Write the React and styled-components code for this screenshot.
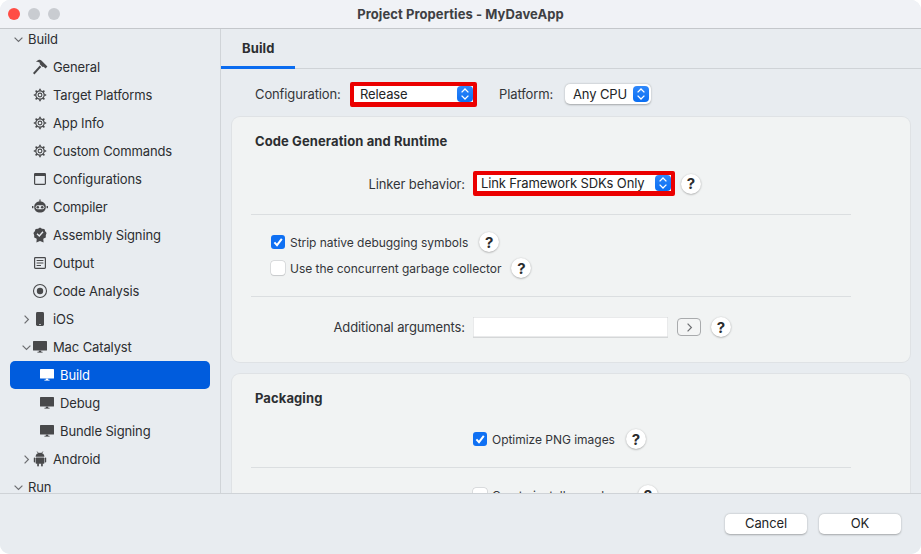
import React from "react";
import styled, { createGlobalStyle } from "styled-components";

const GlobalStyle = createGlobalStyle`
  html, body {
    margin: 0;
    background: #ffffff;
  }
  * {
    box-sizing: border-box;
  }
`;

const ICON_COLOR = "#48494b";

const GearIcon = () => (
  <svg width="16" height="16" viewBox="0 0 16 16">
    {[0, 45, 90, 135, 180, 225, 270, 315].map((a) => (
      <line key={a} x1="8" y1="1.8" x2="8" y2="3.8" stroke={ICON_COLOR} strokeWidth="1.6" transform={`rotate(${a} 8 8)`} />
    ))}
    <circle cx="8" cy="8" r="4.2" fill="none" stroke={ICON_COLOR} strokeWidth="1.2" />
    <circle cx="8" cy="8" r="1.9" fill="none" stroke={ICON_COLOR} strokeWidth="1.1" />
  </svg>
);

const HammerIcon = () => (
  <svg width="16" height="16" viewBox="0 0 16 16">
    <path d="M1 14 L7.8 6.6 L9.2 8 L2.4 15.4 Z" fill={ICON_COLOR} />
    <path d="M4 2.8 C6.4 0.6 8 0.4 9.4 1.4 L15.4 7.4 L13.6 9.6 L11.6 7.8 L10.6 8 L7.8 5.2 L7.8 3.8 C6.8 3 5.6 2.8 4 2.8 Z" fill={ICON_COLOR} />
  </svg>
);

const WindowIcon = () => (
  <svg width="16" height="16" viewBox="0 0 16 16">
    <rect x="2.6" y="2.6" width="10.8" height="10.8" rx="0.8" fill="none" stroke={ICON_COLOR} strokeWidth="1.2" />
    <rect x="2.6" y="2.6" width="10.8" height="2.4" fill={ICON_COLOR} />
  </svg>
);

const RobotIcon = () => (
  <svg width="16" height="16" viewBox="0 0 16 16">
    <line x1="8" y1="0.6" x2="8" y2="3" stroke={ICON_COLOR} strokeWidth="1.2" />
    <rect x="0" y="7" width="1.4" height="2.2" fill={ICON_COLOR} />
    <rect x="14.6" y="7" width="1.4" height="2.2" fill={ICON_COLOR} />
    <path d="M2.2 8 C2.2 4.6 4.8 2.6 8 2.6 C11.2 2.6 13.8 4.6 13.8 8 C13.8 11.6 11.2 13.6 8 13.6 C4.8 13.6 2.2 11.6 2.2 8 Z" fill={ICON_COLOR} />
    <rect x="3.6" y="6.2" width="8.8" height="4" rx="2" fill="#e8ecf0" />
    <circle cx="5.8" cy="8.2" r="1.3" fill={ICON_COLOR} />
    <circle cx="10.2" cy="8.2" r="1.3" fill={ICON_COLOR} />
  </svg>
);

const BadgeIcon = () => (
  <svg width="16" height="16" viewBox="0 0 16 16">
    <path d="M4.8 11 L4.4 15.4 L8 14 L11.6 15.4 L11.2 11 Z" fill={ICON_COLOR} />
    <path d="M8 0.6 L10 1.8 L12.4 2 L13.2 4.2 L14.6 6 L13.8 8.2 L13.8 10.4 L11.6 11.4 L10 12.8 L8 12.2 L6 12.8 L4.4 11.4 L2.2 10.4 L2.2 8.2 L1.4 6 L2.8 4.2 L3.6 2 L6 1.8 Z" fill={ICON_COLOR} />
    <path d="M5 6.8 L7.3 9 L11 4.8" fill="none" stroke="#e8ecf0" strokeWidth="1.4" />
  </svg>
);

const OutputIcon = () => (
  <svg width="16" height="16" viewBox="0 0 16 16">
    <rect x="2.6" y="2.6" width="10.8" height="10.8" rx="0.8" fill="none" stroke={ICON_COLOR} strokeWidth="1.2" />
    <path d="M4.6 5.5 H11.4 M4.6 8 H11.4 M4.6 10.5 H9" stroke={ICON_COLOR} strokeWidth="1" />
  </svg>
);

const TargetIcon = () => (
  <svg width="16" height="16" viewBox="0 0 16 16">
    <circle cx="8" cy="8" r="6.5" fill="none" stroke={ICON_COLOR} strokeWidth="1.1" />
    <circle cx="8" cy="8" r="3.2" fill={ICON_COLOR} />
  </svg>
);

const PhoneIcon = () => (
  <svg width="16" height="16" viewBox="0 0 16 16">
    <rect x="4" y="1" width="8" height="14" rx="1.4" fill={ICON_COLOR} />
    <rect x="7" y="13.2" width="2" height="0.7" fill="#e8ecf0" />
  </svg>
);

const MonitorIcon = ({ color = ICON_COLOR }) => (
  <svg width="16" height="16" viewBox="0 0 16 16">
    <rect x="1" y="2" width="14" height="9.6" rx="0.6" fill={color} />
    <rect x="6.8" y="11.6" width="2.4" height="1.4" fill={color} />
    <rect x="5.4" y="12.8" width="5.2" height="0.8" fill={color} />
  </svg>
);

const AndroidIcon = () => (
  <svg width="16" height="16" viewBox="0 0 16 16">
    <path d="M5.2 0.6 L6.6 2.6 M10.8 0.6 L9.4 2.6" stroke={ICON_COLOR} strokeWidth="0.9" />
    <path d="M3.6 5.8 C3.6 3.4 5.6 1.8 8 1.8 C10.4 1.8 12.4 3.4 12.4 5.8 Z" fill={ICON_COLOR} />
    <rect x="3.6" y="6.4" width="8.8" height="6.4" rx="0.8" fill={ICON_COLOR} />
    <rect x="1.8" y="6.4" width="1.3" height="5" rx="0.65" fill={ICON_COLOR} />
    <rect x="12.9" y="6.4" width="1.3" height="5" rx="0.65" fill={ICON_COLOR} />
    <rect x="5.2" y="12" width="1.7" height="3.6" rx="0.8" fill={ICON_COLOR} />
    <rect x="9.1" y="12" width="1.7" height="3.6" rx="0.8" fill={ICON_COLOR} />
  </svg>
);

const ChevronDown = () => (
  <svg width="11" height="11" viewBox="0 0 11 11">
    <path d="M1.6 3.6 L5.5 7.4 L9.4 3.6" fill="none" stroke="#6c6e71" strokeWidth="1.2" />
  </svg>
);

const ChevronRight = () => (
  <svg width="11" height="11" viewBox="0 0 11 11">
    <path d="M3.6 1.6 L7.4 5.5 L3.6 9.4" fill="none" stroke="#6c6e71" strokeWidth="1.2" />
  </svg>
);

const TREE = [
  { label: "Build", depth: 0, open: true },
  { label: "General", depth: 1, icon: <HammerIcon /> },
  { label: "Target Platforms", depth: 1, icon: <GearIcon /> },
  { label: "App Info", depth: 1, icon: <GearIcon /> },
  { label: "Custom Commands", depth: 1, icon: <GearIcon /> },
  { label: "Configurations", depth: 1, icon: <WindowIcon /> },
  { label: "Compiler", depth: 1, icon: <RobotIcon /> },
  { label: "Assembly Signing", depth: 1, icon: <BadgeIcon /> },
  { label: "Output", depth: 1, icon: <OutputIcon /> },
  { label: "Code Analysis", depth: 1, icon: <TargetIcon /> },
  { label: "iOS", depth: 1, icon: <PhoneIcon />, closed: true },
  { label: "Mac Catalyst", depth: 1, icon: <MonitorIcon />, open: true },
  { label: "Build", depth: 2, selected: true },
  { label: "Debug", depth: 2 },
  { label: "Bundle Signing", depth: 2 },
  { label: "Android", depth: 1, icon: <AndroidIcon />, closed: true },
  { label: "Run", depth: 0, open: true },
];

export default function App() {
  return (
    <>
      <GlobalStyle />
      <Window>
        <TitleBar>
          <Lights>
            <Light $color="#ff4d45" />
            <Light $color="#c9ccd1" />
            <Light $color="#c9ccd1" />
          </Lights>
          <Title>Project Properties - MyDaveApp</Title>
        </TitleBar>

        <Body>
          <Sidebar>
            <TreeList>
              {TREE.map((item, i) => (
                <TreeRow key={i} $depth={item.depth} $selected={item.selected}>
                  <ChevronSlot>
                    {item.open && <ChevronDown />}
                    {item.closed && <ChevronRight />}
                  </ChevronSlot>
                  {item.depth > 0 && (
                    <IconSlot>
                      {item.depth === 2 ? (
                        <MonitorIcon color={item.selected ? "#ffffff" : ICON_COLOR} />
                      ) : (
                        item.icon
                      )}
                    </IconSlot>
                  )}
                  <TreeLabel $depth={item.depth}>{item.label}</TreeLabel>
                </TreeRow>
              ))}
            </TreeList>
          </Sidebar>

          <Main>
            <TabStrip>
              <Tab>Build</Tab>
            </TabStrip>

            <Content>
              <ConfigBar>
                <Label>Configuration:</Label>
                <Select $width={127} $highlight $pad={6}>
                  Release
                  <Stepper />
                </Select>
                <PlatformLabel>Platform:</PlatformLabel>
                <Select $width={86} $pad={8}>
                  Any CPU
                  <Stepper />
                </Select>
              </ConfigBar>

              <Card $top={11}>
                <CardTitle>Code Generation and Runtime</CardTitle>
                <FormRow $top={22}>
                  <FieldLabel>Linker behavior:</FieldLabel>
                  <Select $width={202} $highlight $pad={4}>
                    Link Framework SDKs Only
                    <Stepper />
                  </Select>
                  <Help $left={6}>?</Help>
                </FormRow>
                <Divider $top={18} />
                <CheckRow $top={17} $left={39}>
                  <Checkbox $checked>
                    <CheckMark />
                  </Checkbox>
                  <CheckLabel>Strip native debugging symbols</CheckLabel>
                  <Help $left={11}>?</Help>
                </CheckRow>
                <CheckRow $top={6} $left={39}>
                  <Checkbox />
                  <CheckLabel>Use the concurrent garbage collector</CheckLabel>
                  <Help $left={10}>?</Help>
                </CheckRow>
                <Divider $top={18} />
                <FormRow $top={20}>
                  <FieldLabel>Additional arguments:</FieldLabel>
                  <TextField />
                  <ArrowButton>
                    <ChevronRight />
                  </ArrowButton>
                  <Help $left={10}>?</Help>
                </FormRow>
                <CardEnd />
              </Card>

              <Card $top={12}>
                <CardTitle>Packaging</CardTitle>
                <CheckRow $top={23} $left={241}>
                  <Checkbox $checked>
                    <CheckMark />
                  </Checkbox>
                  <CheckLabel>Optimize PNG images</CheckLabel>
                  <Help $left={11}>?</Help>
                </CheckRow>
                <Divider $top={18} />
                <CheckRow $top={17} $left={241}>
                  <Checkbox />
                  <CheckLabel>Create installer package</CheckLabel>
                  <Help $left={9}>?</Help>
                </CheckRow>
                <CardEnd />
              </Card>
            </Content>
          </Main>
        </Body>

        <Footer>
          <FooterButton>Cancel</FooterButton>
          <FooterButton>OK</FooterButton>
        </Footer>
      </Window>
    </>
  );
}

const CheckMark = () => (
  <svg width="14" height="14" viewBox="0 0 14 14">
    <path d="M3.4 7.4 L6 10.2 L10.8 3.8" fill="none" stroke="#ffffff" strokeWidth="2" />
  </svg>
);

const Stepper = () => (
  <StepperBox>
    <svg width="16" height="16" viewBox="0 0 16 16">
      <path d="M4.6 6.4 L8 3 L11.4 6.4 M4.6 9.6 L8 13 L11.4 9.6" fill="none" stroke="#ffffff" strokeWidth="1.3" />
    </svg>
  </StepperBox>
);

const Window = styled.div`
  width: 921px;
  height: 554px;
  display: flex;
  flex-direction: column;
  overflow: hidden;
  border-radius: 10px;
  background: #e8ecf0;
  color: #2c2e31;
  font-family: Inter, "Liberation Sans", sans-serif;
  font-size: 13px;
  letter-spacing: -0.12px;
`;

const TitleBar = styled.div`
  position: relative;
  flex: none;
  height: 29px;
  display: flex;
  align-items: center;
  justify-content: center;
  background: #f0f2f6;
  border-bottom: 1px solid #c4c7cb;
`;

const Lights = styled.div`
  position: absolute;
  left: 8px;
  top: 8px;
  display: flex;
  gap: 8px;
`;

const Light = styled.span`
  width: 12px;
  height: 12px;
  border-radius: 50%;
  background: ${(p) => p.$color};
`;

const Title = styled.div`
  font-weight: 700;
  letter-spacing: 0.07px;
  color: #3e4043;
`;

const Body = styled.div`
  flex: 1;
  min-height: 0;
  display: flex;
  overflow: hidden;
`;

const Sidebar = styled.div`
  flex: none;
  width: 221px;
  overflow: hidden;
  border-right: 1px solid #d0d4d8;
`;

const TreeList = styled.div`
  margin-top: -4px;
`;

const DEPTH_PAD = [3, 11, 18];

const TreeRow = styled.div`
  height: 28px;
  margin: 0 10px;
  display: flex;
  align-items: center;
  padding-left: ${(p) => DEPTH_PAD[p.$depth]}px;
  border-radius: 5px;
  background: ${(p) => (p.$selected ? "#005cdd" : "transparent")};
  color: ${(p) => (p.$selected ? "#ffffff" : "#2c2e31")};
`;

const ChevronSlot = styled.span`
  flex: none;
  width: 11px;
  height: 11px;
  display: flex;
`;

const IconSlot = styled.span`
  flex: none;
  width: 16px;
  height: 16px;
  display: flex;
  align-items: center;
  justify-content: center;
`;

const TreeLabel = styled.span`
  margin-left: ${(p) => (p.$depth === 0 ? 4 : 5)}px;
`;

const Main = styled.div`
  flex: 1;
  min-width: 0;
  display: flex;
  flex-direction: column;
`;

const TabStrip = styled.div`
  flex: none;
  height: 40px;
  display: flex;
  border-bottom: 1px solid #cfd3d7;
`;

const Tab = styled.div`
  width: 74px;
  height: 40px;
  display: flex;
  align-items: center;
  padding-left: 21px;
  font-weight: 700;
  letter-spacing: 0.1px;
  border-bottom: 3px solid #0a6cf0;
`;

const Content = styled.div`
  flex: 1;
  min-height: 0;
  overflow: hidden;
  padding: 0 11px;
`;

const ConfigBar = styled.div`
  height: 24px;
  margin-top: 13px;
  padding-left: 23px;
  display: flex;
  align-items: center;
`;

const Label = styled.span`
  width: 95px;
  color: #333539;
`;

const PlatformLabel = styled.span`
  width: 66px;
  margin-left: 22px;
  color: #333539;
`;

const Select = styled.div`
  flex: none;
  width: ${(p) => p.$width}px;
  display: flex;
  align-items: center;
  justify-content: space-between;
  background: #ffffff;
  color: #222426;
  ${(p) =>
    p.$highlight
      ? `
    align-self: flex-start;
    height: 25px;
    border: 4px solid #eb0000;
    border-bottom-width: 5px;
    border-radius: 2px;
    padding: 0 0 0 ${p.$pad}px;
  `
      : `
    height: 20px;
    border-radius: 5px;
    padding: 0 2px 0 ${p.$pad}px;
    box-shadow: 0 0.5px 2px rgba(0, 0, 0, 0.3);
  `}
`;

const StepperBox = styled.span`
  flex: none;
  width: 16px;
  height: 16px;
  display: flex;
  border-radius: 4px;
  background: linear-gradient(#2f88fb, #0a6ef2);
`;

const Card = styled.div`
  margin-top: ${(p) => p.$top}px;
  padding-top: 16px;
  border-radius: 8px;
  background: #f1f3f3;
  box-shadow: 0 0 0 1px #dfe2e5;
`;

const CardTitle = styled.div`
  height: 16px;
  padding-left: 23px;
  line-height: 16px;
  font-weight: 700;
  letter-spacing: 0.1px;
`;

const CardEnd = styled.div`
  height: 25px;
`;

const FormRow = styled.div`
  margin-top: ${(p) => p.$top}px;
  display: flex;
  align-items: center;
`;

const FieldLabel = styled.span`
  flex: none;
  width: 233px;
  margin-right: 8px;
  text-align: right;
  color: #333539;
`;

const CheckRow = styled.div`
  height: 20px;
  margin-top: ${(p) => p.$top}px;
  padding-left: ${(p) => p.$left}px;
  display: flex;
  align-items: center;
`;

const Checkbox = styled.span`
  flex: none;
  width: 14px;
  height: 14px;
  display: flex;
  border-radius: 3px;
  background: ${(p) => (p.$checked ? "#0f70f3" : "#ffffff")};
  box-shadow: ${(p) => (p.$checked ? "none" : "0 0 0 0.5px #c4c6c9, 0 0.5px 1px rgba(0, 0, 0, 0.15)")};
`;

const CheckLabel = styled.span`
  margin-left: 5px;
  font-size: 12px;
  letter-spacing: -0.03px;
  color: #333539;
`;

const Help = styled.span`
  flex: none;
  width: 20px;
  height: 20px;
  margin-left: ${(p) => p.$left}px;
  display: flex;
  align-items: center;
  justify-content: center;
  border-radius: 50%;
  background: #ffffff;
  color: #2a2b2d;
  font-size: 15px;
  font-weight: 700;
  box-shadow: 0 0.5px 2px rgba(0, 0, 0, 0.35);
`;

const Divider = styled.div`
  width: 600px;
  height: 1px;
  margin: ${(p) => p.$top}px 0 0 19px;
  background: #dbdee0;
`;

const TextField = styled.div`
  flex: none;
  width: 195px;
  height: 20px;
  background: #ffffff;
  box-shadow: inset 0 0 0 0.5px #d4d6d8, 0 0.5px 0 #b9bbbe;
`;

const ArrowButton = styled.span`
  flex: none;
  width: 24px;
  height: 18px;
  margin-left: 9px;
  display: flex;
  align-items: center;
  justify-content: center;
  border: 1px solid #a9abad;
  border-radius: 4px;
  background: #f4f5f5;
`;

const Footer = styled.div`
  flex: none;
  height: 61px;
  display: flex;
  justify-content: flex-end;
  gap: 12px;
  padding: 20px 20px 0 0;
  background: #e8ecf0;
  border-top: 1px solid #cfd3d7;
`;

const FooterButton = styled.button`
  width: 82px;
  height: 20px;
  padding: 0 0 2px;
  border: 0;
  border-radius: 5px;
  background: #ffffff;
  color: #222426;
  font: inherit;
  letter-spacing: inherit;
  box-shadow: 0 0.5px 2px rgba(0, 0, 0, 0.3);
`;
